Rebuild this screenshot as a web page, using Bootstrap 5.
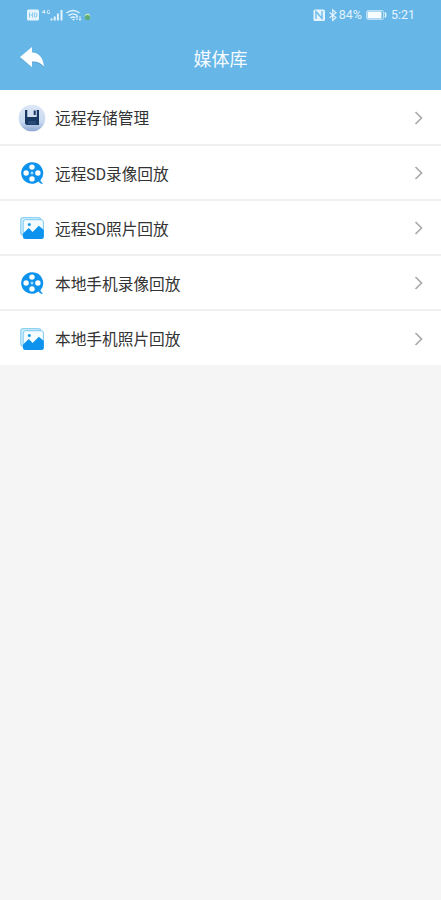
<!DOCTYPE html>
<html lang="zh-CN">
<head>
<meta charset="utf-8">
<meta name="viewport" content="width=device-width, initial-scale=1">
<title>媒体库</title>
<link href="https://cdn.jsdelivr.net/npm/bootstrap@5.3.0/dist/css/bootstrap.min.css" rel="stylesheet">
<style>
body{background:#f5f5f5;font-family:Roboto,"Noto Sans CJK SC",sans-serif;min-height:900px}
.app-header{background:#66b6e7;height:90px}
.status-bar{height:29px;padding:0 26px 0 27px;font-size:12.5px;line-height:29px;color:#e3f4fe}
.status-bar svg,.title-bar svg,.media-item svg{display:block;flex:none}
.title-bar{height:61px;padding:0 20px}
.title-bar h1{font-size:18px;line-height:62px;color:#f5fbff;font-weight:400}
.side-slot{width:26px}
.list-group-flush>.media-item{height:55px;padding:1px 14px 0 18px;border-color:#f0f0f0;border-width:0 0 2px;color:#333;font-size:15.7px;background:#fff}
.list-group-flush>.media-item:first-child{height:56px}
.list-group-flush>.media-item:last-child{height:54px;border-bottom-width:0}
.media-label{margin-left:9px;line-height:24px;padding-top:3px}
</style>
<script src="https://cdn.jsdelivr.net/npm/bootstrap@5.3.0/dist/js/bootstrap.bundle.min.js"></script>
</head>
<body>
<svg class="d-none">
<symbol id="reel" viewBox="0 0 28 28"><path fill="#0d93ee" fill-rule="evenodd" d="M14 3.200a10.800 10.800 0 1 0 6.500 19.400q1.300 2.400 4.200 2.300l-.4-1.200q-1.300-.3-1.900-2.500A10.800 10.800 0 0 0 14 3.200ZM14 5.400a2.700 2.700 0 1 1 0 5.400A2.700 2.700 0 0 1 14 5.400ZM8.100 11.300a2.700 2.700 0 1 1 0 5.400 2.700 2.700 0 0 1 0-5.400ZM19.900 11.300a2.700 2.700 0 1 1 0 5.400 2.700 2.700 0 0 1 0-5.400ZM14 17.200a2.700 2.700 0 1 1 0 5.400 2.700 2.700 0 0 1 0-5.400Z"/><circle cx="14" cy="14" r="1.500" fill="#9bd6fb"/></symbol>
<symbol id="photo" viewBox="0 0 28 28"><path d="M5.500 21.500Q2.800 21 2.800 18.500V6Q2.800 3.700 5.500 3.700H20q2.500 0 3 2" fill="#d6f1fc" stroke="#8dd2f2" stroke-width="1.300"/><rect x="5.200" y="5.700" width="20.200" height="18.800" rx="2.300" fill="#f4fcff" stroke="#7cc9f2" stroke-width="1"/><path d="M5 19.500l5.800-5.500 3.800 4 6.200-6.300 5 4.300v6.500q0 2.500-2.500 2.500H7.500Q5 25 5 22.500Z" fill="#0d93ee"/><circle cx="11.300" cy="10.500" r="1.500" fill="#1597e8"/></symbol>
<symbol id="chevron" viewBox="0 0 16 16"><path d="M4.500 2l6 6-6 6" fill="none" stroke="#aaa" stroke-width="1.700"/></symbol>
</svg>
<header class="app-header">
<div class="status-bar d-flex justify-content-between">
<div class="d-flex align-items-center">
<svg width="65" height="14" viewBox="0 0 65 14" fill="#e3f4fe"><rect y="1.500" width="12" height="11" rx="1.500"/><path d="M2.500 4.500v5m0-2.500h3m0-2.500v5M7.500 5v4h1q1.500 0 1.500-2T8.500 5Z" fill="none" stroke="#8bc9ed"/><path d="M17.500 5.500V2l-2.300 2.400h3M22.500 2.500h-1.300q-1 0-1 1.500t1 1.500h1.300V4" fill="none" stroke="#e3f4fe" stroke-width=".9"/><path d="M23.500 10.500h2v2h-2zM26.700 8.500h2v4h-2zM29.900 5.500h2v7h-2zM33.500 2h2v10.500h-2z"/><g fill="none" stroke="#e3f4fe" stroke-width="1.400"><path d="M39.500 5q6.500-5 13 0M41.500 7.600q4.500-3.500 9 0M43.700 10q2.300-2 4.600 0"/></g><path d="M45 11l1.500 1.700L48 11M48.500 9l1.500-1.500L51.500 9h-1v3h-1V9ZM51.500 11h1V8h1v3h1L53 12.700Z"/><path d="M57.500 8.500q.5-3 4-3 2 1.500 2 4Z" fill="#c9e7b3"/><circle cx="60.500" cy="9.500" r="2.600" fill="#5cab78"/></svg>
</div>
<div class="d-flex align-items-center">
<svg width="26" height="14" viewBox="0 0 26 14"><rect x=".5" y="1.500" width="11.500" height="11.500" rx="1.500" fill="#e3f4fe"/><path d="M3 11V3.500l6 7V3" fill="none" stroke="#66b6e7" stroke-width="1.300"/><path d="M16.500 4.500l6.500 5-3.300 3V1.800l3.300 2.900-6.500 5" fill="none" stroke="#e3f4fe" stroke-width="1.200"/></svg>
<span>84%</span>
<svg class="ms-1 me-1" width="21" height="14" viewBox="0 0 21 14"><rect x=".5" y="2.500" width="17" height="9" rx="1.500" fill="none" stroke="#b9dff6"/><rect x="1.500" y="3.500" width="14" height="7" rx=".5" fill="#f7fcff"/><path d="M19 4.500q1.500 2.500 0 5" fill="none" stroke="#e3f4fe" stroke-width="1.500"/></svg>
<span>5:21</span>
</div>
</div>
<div class="title-bar d-flex justify-content-between align-items-start">
<svg class="mt-3" width="26" height="24" viewBox="0 0 26 24"><path d="M1 13.500L12 3.500v6q10.500 0 12 13.500-4.500-6-12-5.500v5Z" fill="#4d91bd" opacity=".55"/><path d="M0 12L12 2v5.500q10.500.5 12 14.200-4.500-5.700-12-5.200v5.700Z" fill="#fff"/></svg>
<h1 class="m-0">媒体库</h1>
<span class="side-slot"></span>
</div>
</header>
<main class="list-group list-group-flush">
<a class="media-item list-group-item d-flex align-items-center"><svg width="28" height="28" viewBox="0 0 28 28"><defs><linearGradient id="disc" x2="0" y2="1"><stop stop-color="#dce7f6"/><stop offset=".65" stop-color="#c8d9f0"/><stop offset="1" stop-color="#8ca6d2"/></linearGradient></defs><circle cx="14" cy="14" r="13.300" fill="url(#disc)"/><path d="M7 6h2.500v7h9V6H21v15H8.500L7 19.500Z" fill="#183763"/><path d="M9.500 6.500h9V13h-9Z" fill="#d3e0f2"/><path d="M15.700 6.500h2v4.500h-2Z" fill="#183763"/><path d="M10 17h8v3.500h-8Z" fill="#294b78"/></svg><span class="media-label">远程存储管理</span><svg class="ms-auto" width="16" height="16"><use href="#chevron"/></svg></a>
<a class="media-item list-group-item d-flex align-items-center"><svg width="28" height="28"><use href="#reel"/></svg><span class="media-label">远程SD录像回放</span><svg class="ms-auto" width="16" height="16"><use href="#chevron"/></svg></a>
<a class="media-item list-group-item d-flex align-items-center"><svg width="28" height="28"><use href="#photo"/></svg><span class="media-label">远程SD照片回放</span><svg class="ms-auto" width="16" height="16"><use href="#chevron"/></svg></a>
<a class="media-item list-group-item d-flex align-items-center"><svg width="28" height="28"><use href="#reel"/></svg><span class="media-label">本地手机录像回放</span><svg class="ms-auto" width="16" height="16"><use href="#chevron"/></svg></a>
<a class="media-item list-group-item d-flex align-items-center"><svg width="28" height="28"><use href="#photo"/></svg><span class="media-label">本地手机照片回放</span><svg class="ms-auto" width="16" height="16"><use href="#chevron"/></svg></a>
</main>
</body>
</html>
